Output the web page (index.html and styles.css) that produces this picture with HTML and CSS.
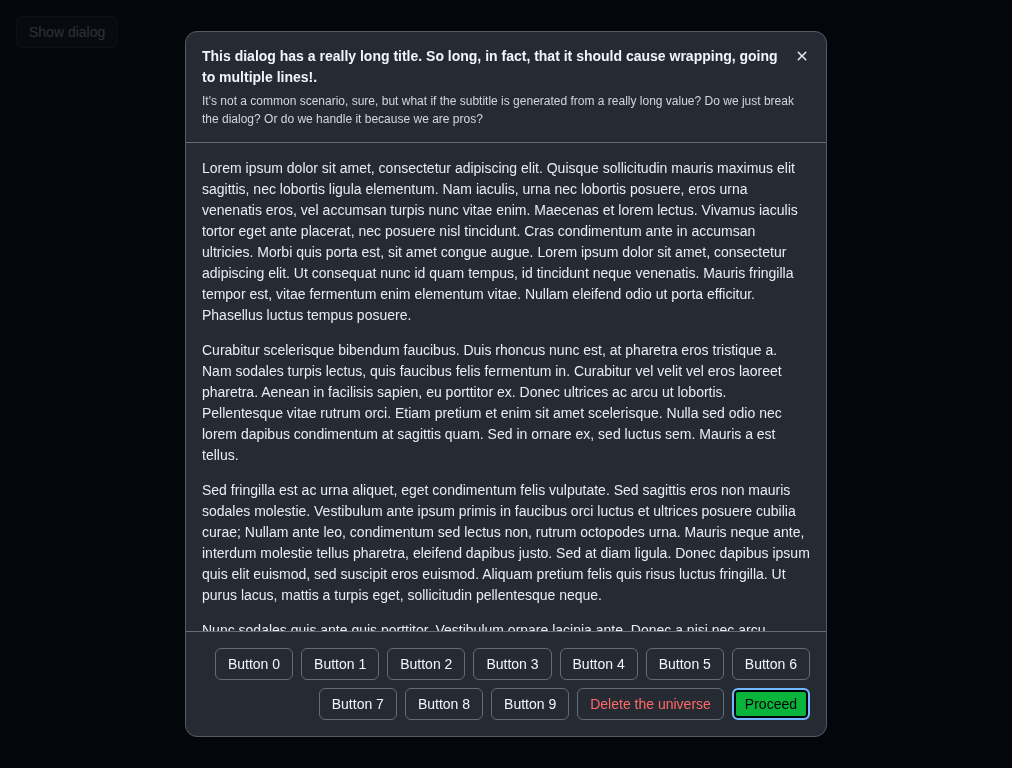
FILE: index.html
```html
<!DOCTYPE html>
<html lang="en">
<head>
<meta charset="utf-8">
<title>Dialog</title>
<link rel="stylesheet" href="styles.css">
</head>
<body>
<div class="page">
  <button class="show-btn">Show dialog</button>
</div>
<div class="backdrop">
  <div class="dialog" role="dialog">
    <div class="dialog-header">
      <h1 class="title">This dialog has a really long title. So long, in fact, that it should cause wrapping, going to multiple lines!.</h1>
      <button class="close" aria-label="Close">
        <svg width="16" height="16" viewBox="0 0 16 16"><path d="M3.72 3.72a.75.75 0 0 1 1.06 0L8 6.94l3.22-3.22a.749.749 0 0 1 1.275.326.749.749 0 0 1-.215.734L9.06 8l3.22 3.22a.749.749 0 0 1-.326 1.275.749.749 0 0 1-.734-.215L8 9.06l-3.22 3.22a.751.751 0 0 1-1.042-.018.751.751 0 0 1-.018-1.042L6.94 8 3.72 4.78a.75.75 0 0 1 0-1.06Z" fill="currentColor"/></svg>
      </button>
      <h2 class="subtitle">It's not a common scenario, sure, but what if the subtitle is generated from a really long value? Do we just break the dialog? Or do we handle it because we are pros?</h2>
    </div>
    <div class="dialog-body">
      <p>Lorem ipsum dolor sit amet, consectetur adipiscing elit. Quisque sollicitudin mauris maximus elit sagittis, nec lobortis ligula elementum. Nam iaculis, urna nec lobortis posuere, eros urna venenatis eros, vel accumsan turpis nunc vitae enim. Maecenas et lorem lectus. Vivamus iaculis tortor eget ante placerat, nec posuere nisl tincidunt. Cras condimentum ante in accumsan ultricies. Morbi quis porta est, sit amet congue augue. Lorem ipsum dolor sit amet, consectetur adipiscing elit. Ut consequat nunc id quam tempus, id tincidunt neque venenatis. Mauris fringilla tempor est, vitae fermentum enim elementum vitae. Nullam eleifend odio ut porta efficitur. Phasellus luctus tempus posuere.</p>
      <p>Curabitur scelerisque bibendum faucibus. Duis rhoncus nunc est, at pharetra eros tristique a. Nam sodales turpis lectus, quis faucibus felis fermentum in. Curabitur vel velit vel eros laoreet pharetra. Aenean in facilisis sapien, eu porttitor ex. Donec ultrices ac arcu ut lobortis. Pellentesque vitae rutrum orci. Etiam pretium et enim sit amet scelerisque. Nulla sed odio nec lorem dapibus condimentum at sagittis quam. Sed in ornare ex, sed luctus sem. Mauris a est tellus.</p>
      <p>Sed fringilla est ac urna aliquet, eget condimentum felis vulputate. Sed sagittis eros non mauris sodales molestie. Vestibulum ante ipsum primis in faucibus orci luctus et ultrices posuere cubilia curae; Nullam ante leo, condimentum sed lectus non, rutrum octopodes urna. Mauris neque ante, interdum molestie tellus pharetra, eleifend dapibus justo. Sed at diam ligula. Donec dapibus ipsum quis elit euismod, sed suscipit eros euismod. Aliquam pretium felis quis risus luctus fringilla. Ut purus lacus, mattis a turpis eget, sollicitudin pellentesque neque.</p>
      <p>Nunc sodales quis ante quis porttitor. Vestibulum ornare lacinia ante. Donec a nisi nec arcu</p>
    </div>
    <div class="dialog-footer">
      <button class="btn">Button 0</button>
      <button class="btn">Button 1</button>
      <button class="btn">Button 2</button>
      <button class="btn">Button 3</button>
      <button class="btn">Button 4</button>
      <button class="btn">Button 5</button>
      <button class="btn">Button 6</button>
      <button class="btn">Button 7</button>
      <button class="btn">Button 8</button>
      <button class="btn">Button 9</button>
      <button class="btn btn-danger">Delete the universe</button>
      <button class="btn btn-primary">Proceed</button>
    </div>
  </div>
</div>
</body>
</html>
```

FILE: styles.css
```css
* { box-sizing: border-box; }
html, body {
  margin: 0;
  padding: 0;
  height: 100%;
}
body {
  background: #0d1117;
  font-family: "Liberation Sans", Arial, sans-serif;
  color: #f0f6fc;
  font-size: 14px;
}
.page {
  padding: 16px;
}
.show-btn {
  font-family: inherit;
  font-size: 14px;
  height: 32px;
  padding: 0 12px;
  border-radius: 6px;
  background: #212830;
  border: 1px solid #3d444d;
  color: #f0f6fc;
}
.backdrop {
  position: fixed;
  inset: 0;
  background: rgba(1, 4, 9, 0.82);
  display: flex;
  align-items: center;
  justify-content: center;
}
.dialog {
  width: 642px;
  height: 706px;
  background: #262a32;
  border: 1px solid #535a65;
  border-radius: 12px;
  display: flex;
  flex-direction: column;
  overflow: hidden;
}
.dialog-header {
  display: grid;
  grid-template-columns: 1fr 32px;
  align-items: start;
  padding: 8px;
  border-bottom: 1px solid #656c76;
}
.title {
  margin: 0;
  padding: 6px 8px 0;
  font-size: 14px;
  line-height: 21px;
  font-weight: 700;
  color: #f0f6fc;
}
.subtitle {
  grid-column: 1 / -1;
  margin: 0;
  padding: 4px 8px 6px;
  font-size: 12px;
  line-height: 18px;
  font-weight: 400;
  color: #d1d7e0;
}
.close {
  width: 32px;
  height: 32px;
  border: none;
  background: transparent;
  color: #e6edf3;
  display: flex;
  align-items: center;
  justify-content: center;
  padding: 0;
  border-radius: 6px;
}
.dialog-body {
  flex: 1;
  overflow: hidden;
  padding: 15px 16px 16px;
  color: #e6edf3;
  line-height: 21px;
}
.dialog-body p {
  margin: 0 0 14px;
}
.dialog-footer {
  display: flex;
  flex-wrap: wrap;
  justify-content: flex-end;
  gap: 8px;
  padding: 16px;
  border-top: 1px solid #656c76;
}
.btn {
  font-family: inherit;
  font-size: 14px;
  height: 32px;
  padding: 0 12px;
  border-radius: 6px;
  background: #262a32;
  border: 1px solid #656c76;
  color: #f0f6fc;
}
.btn-danger {
  color: #ff6a69;
}
.btn-primary {
  background: #09b43a;
  color: #000;
  border: 2px solid #74b9ff;
  box-shadow: inset 0 0 0 2px #010409;
  padding: 0 11px;
}
```
